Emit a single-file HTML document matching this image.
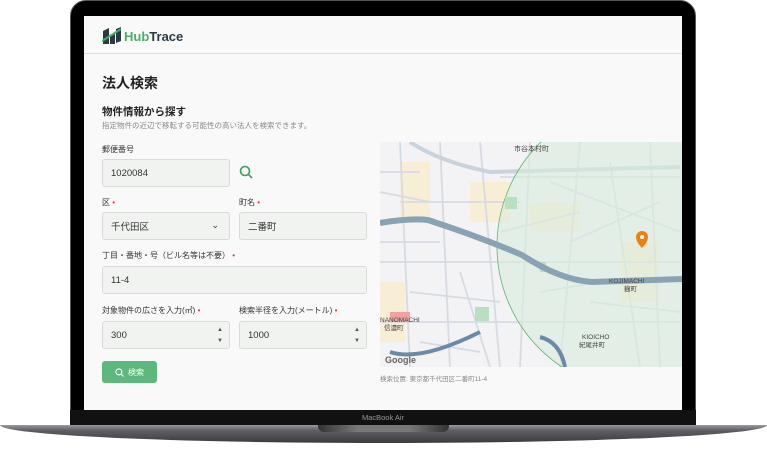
<!DOCTYPE html>
<html><head><meta charset="utf-8"><style>
*{margin:0;padding:0;box-sizing:border-box}
body{width:767px;height:449px;background:#fff;position:relative;overflow:hidden;font-family:"Liberation Sans","Noto Sans CJK JP",sans-serif;color:#333}
.bezel{position:absolute;left:70px;top:0;width:626px;height:428px;background:#000;border-radius:16px 16px 4px 4px;border:1px solid #555}
.screen{position:absolute;left:84px;top:16px;width:598px;height:394px;background:#f9f9f9;overflow:hidden}
.hdr{position:absolute;left:0;top:0;width:100%;height:38px;border-bottom:1px solid #ddd}
.abs{position:absolute}
.lbl{position:absolute;font-size:8px;color:#333}
.req{color:#e33}
.inp{position:absolute;background:#f1f3f1;border:1px solid #dadada;border-radius:3px;font-size:9.5px;color:#333;padding-left:8px;display:flex;align-items:center}
.base{position:absolute;left:0;top:425px;width:767px;height:18px;background:linear-gradient(#9a9a9e,#606064 30%,#3a3a3e);border-radius:0 0 50% 50%/0 0 100% 100%}
.notch{position:absolute;left:318px;top:425px;width:131px;height:7px;background:linear-gradient(90deg,#333,#777 30%,#777 70%,#333);border-radius:0 0 6px 6px}
</style></head><body>
<div class="bezel"></div>
<div class="abs" style="left:70px;top:410px;width:626px;height:16px;background:#111;color:#999;font-size:7.5px;text-align:center;line-height:16px">MacBook Air</div>
<div class="base"></div><div class="notch"></div>
<div class="screen">
<div class="hdr">
<svg class="abs" style="left:18px;top:11px" width="20" height="17" viewBox="0 0 20 17"><path d="M1 17V4l6-3v16z" fill="#2b3b44"/><path d="M8 17V9l5-2v10z" fill="#2b3b44"/><path d="M14 16V2l5-2v14z" fill="#2b3b44"/><path d="M0 14L19 2" stroke="#4cae6d" stroke-width="2"/></svg>
<div class="abs" style="left:40px;top:13px;font-size:13px;font-weight:bold;color:#4cae6d">Hub<span style="color:#2b3b44">Trace</span></div>
</div>
<div class="abs" style="left:18px;top:57px;font-size:14px;font-weight:bold;color:#222">法人検索</div>
<div class="abs" style="left:18px;top:88px;font-size:10.5px;font-weight:bold;color:#222">物件情報から探す</div>
<div class="abs" style="left:18px;top:104px;font-size:7.5px;color:#888">指定物件の近辺で移転する可能性の高い法人を検索できます。</div>
<div class="lbl" style="left:18px;top:128px">郵便番号</div>
<div class="inp" style="left:18px;top:143px;width:128px;height:28px">1020084</div>
<svg class="abs" style="left:155px;top:149px" width="14" height="14" viewBox="0 0 14 14"><circle cx="6" cy="6" r="4.5" fill="none" stroke="#3a9d5d" stroke-width="1.6"/><path d="M9.3 9.3L13 13" stroke="#3a9d5d" stroke-width="1.6"/></svg>
<div class="lbl" style="left:18px;top:181px">区 <span class="req">•</span></div>
<div class="lbl" style="left:155px;top:181px">町名 <span class="req">•</span></div>
<div class="inp" style="left:18px;top:196px;width:128px;height:28px">千代田区<span class="abs" style="right:10px;top:7px;font-size:9px">⌄</span></div>
<div class="inp" style="left:155px;top:196px;width:128px;height:28px">二番町</div>
<div class="lbl" style="left:18px;top:234px">丁目・番地・号（ビル名等は不要） <span class="req">•</span></div>
<div class="inp" style="left:18px;top:250px;width:265px;height:28px">11-4</div>
<div class="lbl" style="left:18px;top:289px">対象物件の広さを入力(㎡) <span class="req">•</span></div>
<div class="lbl" style="left:155px;top:289px">検索半径を入力(メートル) <span class="req">•</span></div>
<div class="inp" style="left:18px;top:305px;width:128px;height:28px">300<span class="abs" style="right:6px;top:3px;font-size:6px;line-height:11px;color:#555">▲<br>▼</span></div>
<div class="inp" style="left:155px;top:305px;width:128px;height:28px">1000<span class="abs" style="right:6px;top:3px;font-size:6px;line-height:11px;color:#555">▲<br>▼</span></div>
<div class="abs" style="left:18px;top:345px;width:55px;height:22px;background:#5cb87c;border-radius:3px;color:#fff;font-size:8px;display:flex;align-items:center;justify-content:center;gap:4px"><svg width="9" height="9" viewBox="0 0 10 10"><circle cx="4.3" cy="4.3" r="3.3" fill="none" stroke="#fff" stroke-width="1.2"/><path d="M6.8 6.8L9.5 9.5" stroke="#fff" stroke-width="1.2"/></svg>検索</div>
<svg class="abs" style="left:296px;top:126px" width="302" height="225" viewBox="0 0 302 225">
<rect width="302" height="225" fill="#f3f2f4"/>
<path d="M20 20h30v60h-30zM90 40h40v40h-40zM0 140h25v60h-25zM240 100h40v60h-40zM150 60h50v30h-50z" fill="#f8eed6"/>
<path d="M0 30H40M120 35H300M60 0L70 225M150 0L140 225M200 0L180 225M230 20L260 225M0 120H300M0 180H300M100 0L120 225M20 60H140M30 150L120 160M0 100H60M80 130L110 225M170 40L300 90M190 100L280 60M20 0L30 225M40 200L100 210M120 90L200 70M210 160L300 170M0 50L50 60M270 0L280 225M160 150L220 140" stroke="#d6dbe3" stroke-width="1.8" fill="none"/>
<path d="M30 0Q60 20 110 30L300 25" stroke="#c9d3dd" stroke-width="4" fill="none"/>
<circle cx="262" cy="104" r="145" fill="#d8ecdc" fill-opacity=".6" stroke="#5fb56f" stroke-width=".8"/>
<path d="M125 55h12v12h-12zM95 165h14v14h-14zM160 120h6v10h-6z" fill="#b8e0c0"/>
<path d="M0 81Q30 76 48 78Q100 95 142 113Q180 138 212 140L302 137" stroke="#8aa3b4" stroke-width="6" fill="none"/>
<path d="M10 210Q40 220 100 190" stroke="#6a8aa8" stroke-width="4" fill="none"/>
<path d="M160 195Q180 200 185 225" stroke="#6a8aa8" stroke-width="4" fill="none"/>
<rect x="10" y="170" width="20" height="10" fill="#f5a0a0"/>
<path d="M256 95a6 6 0 1 1 12 0q0 5-6 11q-6-6-6-11z" fill="#f07f12"/><circle cx="262" cy="95" r="2" fill="#fff"/>
<text x="134" y="9" font-size="7" fill="#444" font-family="Noto Sans CJK JP">市谷本村町</text>
<text x="229" y="141" font-size="6.5" fill="#444">KOJIMACHI</text><text x="244" y="149" font-size="6.5" fill="#444" font-family="Noto Sans CJK JP">麹町</text>
<text x="202" y="197" font-size="6.5" fill="#444">KIOICHO</text><text x="199" y="205" font-size="6.5" fill="#444" font-family="Noto Sans CJK JP">紀尾井町</text>
<text x="0" y="180" font-size="6.5" fill="#444">NANOMACHI</text><text x="4" y="188" font-size="6.5" fill="#444" font-family="Noto Sans CJK JP">信濃町</text>
<text x="5" y="221" font-size="9" fill="#666" font-weight="bold">Google</text>
</svg>
<div class="abs" style="left:296px;top:357px;font-size:6.5px;color:#888">検索位置: 東京都千代田区二番町11-4</div>
</div>
</body></html>
